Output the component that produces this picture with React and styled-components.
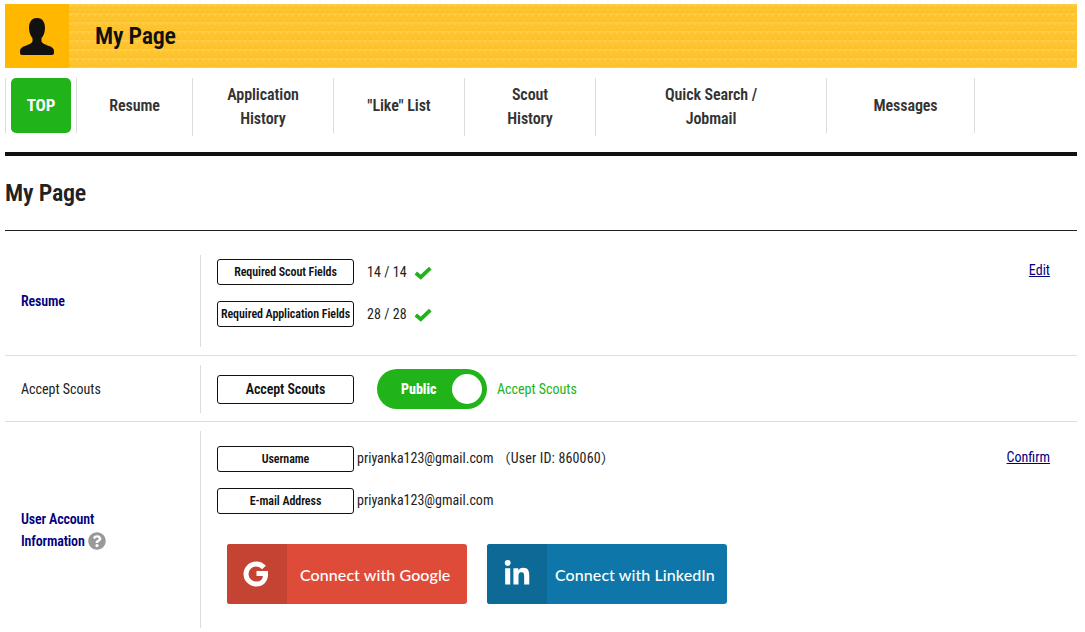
import React from "react";
import styled, { createGlobalStyle } from "styled-components";
import { FaQuestionCircle, FaLinkedinIn } from "react-icons/fa";

const Global = createGlobalStyle`
  html, body { margin: 0; padding: 0; background: #fff; }
  body { font-family: Roboto, "Noto Sans CJK JP", "Liberation Sans", sans-serif; font-stretch: 75%; color: #222; }
  * { box-sizing: border-box; }
`;

const Page = styled.div`
  width: 1085px;
  height: 632px;
  overflow: hidden;
  padding: 4px 8px 0 5px;
`;

const Banner = styled.header`
  height: 64px;
  display: flex;
  align-items: center;
  background-color: #fdc42f;
  background-image:
    linear-gradient(135deg, #ffcc44 25%, transparent 25%),
    linear-gradient(225deg, #ffcc44 25%, transparent 25%),
    linear-gradient(315deg, #fcc029 20%, transparent 20%),
    linear-gradient(45deg, #fcc029 20%, transparent 20%);
  background-size: 6px 9px;
`;

const BannerIcon = styled.div`
  width: 64px;
  height: 64px;
  background: #ffb700;
  display: flex;
  align-items: center;
  justify-content: center;
`;

const BannerTitle = styled.h2`
  margin: 0 0 0 26px;
  font-size: 24px;
  font-weight: 600;
  letter-spacing: -0.25px;
  color: #111;
`;

const Nav = styled.nav`
  display: flex;
  align-items: flex-start;
  margin-top: 10px;
  height: 74px;
`;

const NavItem = styled.a`
  width: ${(p) => p.$w}px;
  height: ${(p) => (p.$tall ? 58 : 55)}px;
  border-left: 1px solid #ddd;
  border-right: ${(p) => (p.$last ? "1px solid #ddd" : "0")};
  padding-left: ${(p) => (p.$last ? 10 : 0)}px;
  display: flex;
  align-items: center;
  justify-content: center;
  text-align: center;
  font-size: 16px;
  line-height: 24px;
  font-weight: 600;
  letter-spacing: -0.08px;
  color: #333;
`;

const TopButton = styled.span`
  width: 60px;
  height: 55px;
  padding-bottom: 1px;
  border-radius: 5px;
  background: #20b31a;
  color: #fff;
  font-size: 17px;
  font-weight: 700;
  display: flex;
  align-items: center;
  justify-content: center;
`;

const ThickRule = styled.div`
  height: 4px;
  background: #111;
`;

const Heading = styled.h1`
  margin: 0;
  height: 75px;
  border-bottom: 1px solid #222;
  font-size: 24px;
  font-weight: 600;
  letter-spacing: -0.2px;
  color: #222;
  line-height: 74px;
`;

const Row = styled.section`
  display: grid;
  grid-template-columns: 195px 1fr;
  padding: ${(p) => p.$pad || "24px 0 8px"};
  border-bottom: ${(p) => (p.$noLine ? "0" : "1px solid #ddd")};
`;

const RowLabel = styled.div`
  padding-left: 16px;
  display: flex;
  align-items: center;
  font-size: 14px;
  line-height: 22px;
  font-weight: ${(p) => (p.$plain ? 400 : 600)};
  letter-spacing: ${(p) => (p.$plain ? 0 : -0.15)}px;
  color: ${(p) => (p.$plain ? "#222" : "#000080")};
`;

const RowBody = styled.div`
  position: relative;
  border-left: 1px solid #ddd;
  padding-left: 16px;
  min-height: ${(p) => p.$h}px;
`;

const FieldLine = styled.div`
  display: flex;
  align-items: center;
  height: 26px;
  margin-top: ${(p) => p.$top || 0}px;
  font-size: 14px;
  color: #222;
`;

const Tag = styled.span`
  width: 137px;
  height: ${(p) => p.$h || 26}px;
  border: 1px solid #111;
  border-radius: 3px;
  display: inline-flex;
  align-items: center;
  justify-content: center;
  font-size: ${(p) => p.$fs || 12}px;
  font-weight: 600;
  letter-spacing: -0.08px;
  color: #111;
  white-space: nowrap;
`;

const Count = styled.span`
  margin-left: 13px;
  letter-spacing: 0.05px;
`;

const Tick = styled.svg`
  width: 18px;
  height: 14px;
  margin: 1px 0 0 7px;
`;

const SideLink = styled.a`
  position: absolute;
  right: 27px;
  top: ${(p) => p.$top}px;
  font-size: 14px;
  color: #000080;
  text-decoration: underline;
`;

const SwitchRow = styled.div`
  display: flex;
  align-items: center;
  height: 48px;
`;

const Toggle = styled.div`
  width: 110px;
  height: 40px;
  margin-left: 23px;
  border-radius: 20px;
  background: #20b31a;
  display: flex;
  align-items: center;
  justify-content: space-between;
  padding: 0 5px 0 24px;
  color: #fff;
  font-size: 14px;
  font-weight: 800;
`;

const Knob = styled.span`
  width: 30px;
  height: 30px;
  border-radius: 50%;
  background: #fff;
`;

const SwitchNote = styled.span`
  margin-left: 10px;
  font-size: 14px;
  color: #20b31a;
`;

const Value = styled.span`
  margin: 0 0 2px 3px;
  line-height: 18px;
`;

const UserId = styled.span`
  letter-spacing: 0.15px;
`;

const Help = styled(FaQuestionCircle)`
  width: 18px;
  height: 18px;
  margin-left: 3px;
  vertical-align: -4px;
  color: #999;
`;

const Socials = styled.div`
  display: flex;
  gap: 20px;
  margin: 30px 0 0 10px;
`;

const Social = styled.a`
  width: 240px;
  height: 60px;
  border-radius: 3px;
  overflow: hidden;
  display: flex;
  align-items: center;
  background: ${(p) => p.$bg};
  color: #fff;
  font-family: Lato, sans-serif;
  font-stretch: normal;
  font-size: 16px;
  font-weight: 500;
  letter-spacing: 0.08px;
`;

const SocialIcon = styled.span`
  width: 60px;
  height: 60px;
  padding-right: ${(p) => p.$nudge || 0}px;
  background: ${(p) => p.$bg};
  display: flex;
  align-items: center;
  justify-content: center;
  margin-right: ${(p) => p.$gap}px;
`;

const Person = () => (
  <svg width="34" height="37" viewBox="0 0 34 37" fill="#111">
    <path d="M17 0C11 0 9 5 9 10c0 4 1.500 8 3.500 10v3c0 2-3.500 3.500-7.500 5-3 1-5 2.500-5 5v2c0 1.200.8 2 2 2h30c1.200 0 2-.8 2-2v-2c0-2.500-2-4-5-5-4-1.500-7.500-3-7.500-5v-3c2-2 3.500-6 3.500-10C25 5 23 0 17 0z" />
  </svg>
);

const GoogleG = () => (
  <svg width="26" height="26" viewBox="0 0 26 26" fill="none">
    <path d="M21 6.500A10.300 10.300 0 0 0 13.200 3C7.500 3 3 7.500 3 13s4.500 10 10.200 10c5.500 0 9.300-3.800 9.300-9.300v-1.200H13.500" stroke="#fff" strokeWidth="5" />
  </svg>
);

const Check = () => (
  <Tick viewBox="0 0 18 14" fill="none">
    <path d="M1.800 7L6.800 11.200 16.300 2.200" stroke="#20b31a" strokeWidth="3.800" />
  </Tick>
);

export default function App() {
  return (
    <Page>
      <Global />
      <Banner>
        <BannerIcon><Person /></BannerIcon>
        <BannerTitle>My Page</BannerTitle>
      </Banner>
      <Nav>
        <NavItem $w={71}><TopButton>TOP</TopButton></NavItem>
        <NavItem $w={116}>Resume</NavItem>
        <NavItem $w={141} $tall>Application<br />History</NavItem>
        <NavItem $w={131}>"Like" List</NavItem>
        <NavItem $w={131} $tall>Scout<br />History</NavItem>
        <NavItem $w={231} $tall>Quick Search /<br />Jobmail</NavItem>
        <NavItem $w={149} $last>Messages</NavItem>
      </Nav>
      <ThickRule />
      <Heading>My Page</Heading>
      <Row>
        <RowLabel>Resume</RowLabel>
        <RowBody $h={92}>
          <FieldLine $top={4}>
            <Tag>Required Scout Fields</Tag>
            <Count>14 / 14</Count>
            <Check />
          </FieldLine>
          <FieldLine $top={16}>
            <Tag>Required Application Fields</Tag>
            <Count>28 / 28</Count>
            <Check />
          </FieldLine>
          <SideLink $top={7}>Edit</SideLink>
        </RowBody>
      </Row>
      <Row $pad="9px 0 8px">
        <RowLabel $plain>Accept Scouts</RowLabel>
        <RowBody $h={48}>
          <SwitchRow>
            <Tag $h={29} $fs={14}>Accept Scouts</Tag>
            <Toggle>Public<Knob /></Toggle>
            <SwitchNote>Accept Scouts</SwitchNote>
          </SwitchRow>
        </RowBody>
      </Row>
      <Row $pad="9px 0 0" $noLine>
        <RowLabel><span>User Account<br />Information<Help /></span></RowLabel>
        <RowBody $h={197}>
          <FieldLine $top={15}>
            <Tag>Username</Tag>
            <Value>priyanka123@gmail.com <UserId>（User ID: 860060）</UserId></Value>
          </FieldLine>
          <FieldLine $top={16}>
            <Tag>E-mail Address</Tag>
            <Value>priyanka123@gmail.com</Value>
          </FieldLine>
          <Socials>
            <Social $bg="#de4c39">
              <SocialIcon $bg="#c54333" $gap={13} $nudge={2}><GoogleG /></SocialIcon>
              Connect with Google
            </Social>
            <Social $bg="#0e76a8">
              <SocialIcon $bg="#0d6a97" $gap={8}><FaLinkedinIn size={28} /></SocialIcon>
              Connect with LinkedIn
            </Social>
          </Socials>
          <SideLink $top={18}>Confirm</SideLink>
        </RowBody>
      </Row>
    </Page>
  );
}
